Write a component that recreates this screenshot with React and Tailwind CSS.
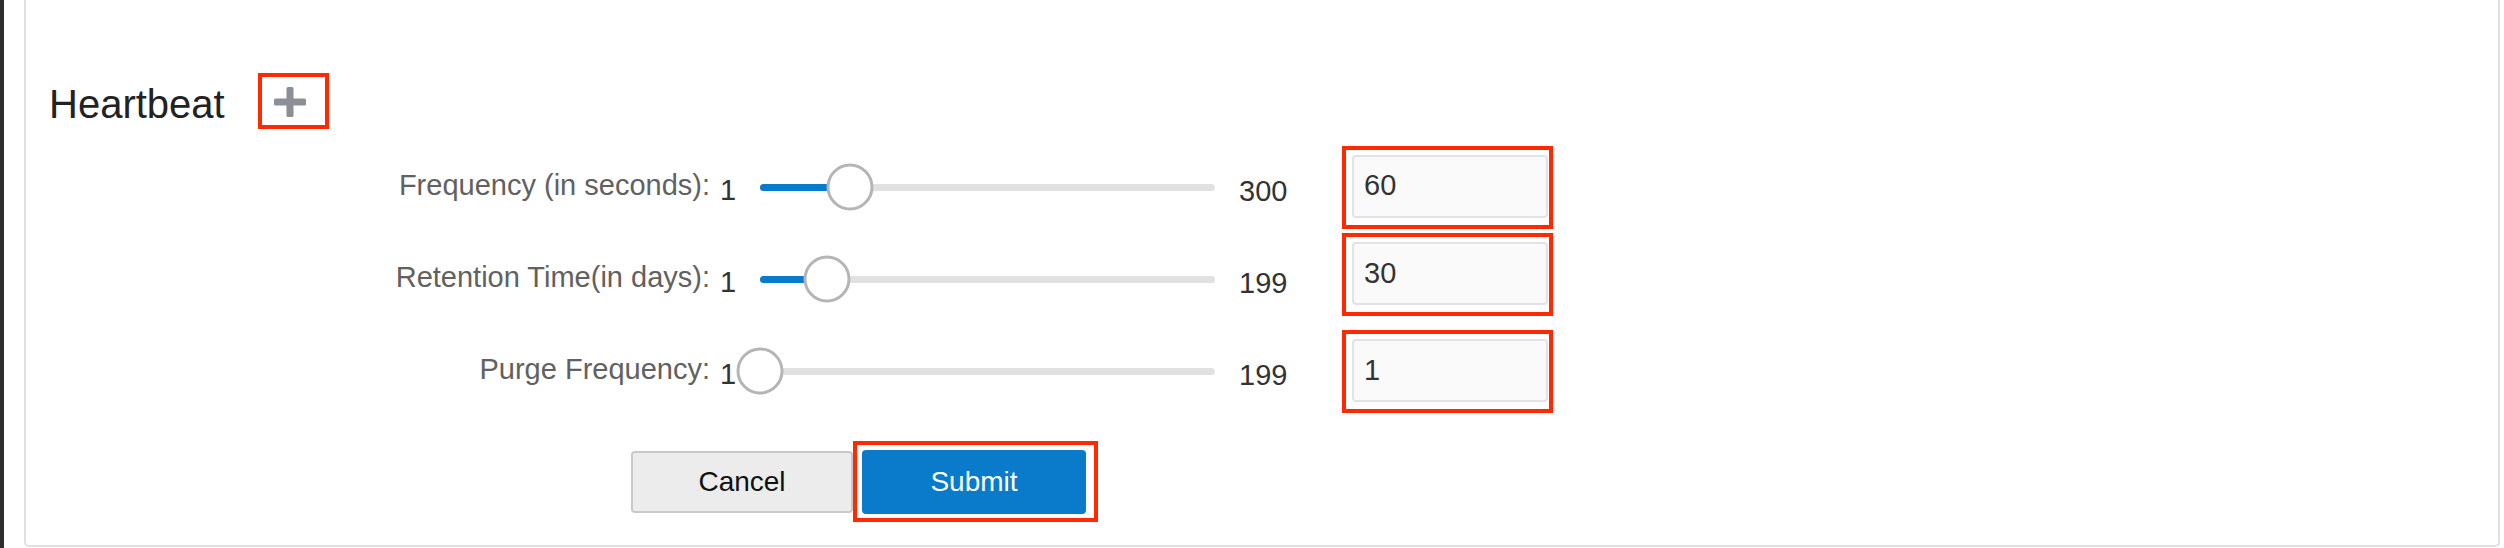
import React from 'react';

const FONT = { fontFamily: '"Liberation Sans", Arial, sans-serif' };

const ROWS = [
  { label: 'Frequency (in seconds):', min: 1, max: 300, value: 60, boxClass: 'self-center' },
  { label: 'Retention Time(in days):', min: 1, max: 199, value: 30, boxClass: 'self-start' },
  { label: 'Purge Frequency:', min: 1, max: 199, value: 1, boxClass: 'self-center mt-[1px]' },
];

function Slider({ min, max, value }) {
  const pct = ((value - min) / (max - min)) * 100;
  return (
    <div className="w-[501px] px-[23px] flex items-center">
      <div className="relative w-full h-[7px] rounded-full bg-[#e1e1e1]">
        <div className="absolute left-0 top-0 h-full rounded-full bg-[#0a7bcb]" style={{ width: `${pct}%` }} />
        <div
          className="absolute top-1/2 w-[47px] h-[47px] -translate-x-1/2 -translate-y-1/2 rounded-full bg-white border-[3px] border-[#b5b5b5]"
          style={{ left: `${pct}%` }}
        />
      </div>
    </div>
  );
}

function Row({ label, min, max, value, boxClass }) {
  return (
    <div className="flex items-center h-[92px]">
      <div className="w-[684px] text-right text-[29px] leading-[32px] text-[#616161] mb-[4px]">{label}</div>
      <span className="w-[27px] pl-[10px] text-[29px] leading-[32px] text-[#333] mt-[6px]">{min}</span>
      <Slider min={min} max={max} value={value} />
      <span className="w-[104px] pl-[1px] text-[29px] leading-[32px] text-[#333] mt-[8px]">{max}</span>
      <div className={`w-[211px] h-[83px] border-4 border-[#ff2a00] pl-[6px] pt-[5px] ${boxClass}`}>
        <div className="w-[196px] h-[63px] rounded-[4px] border-2 border-[#e3e3e3] bg-[#fafafa] flex items-center pl-[10px] text-[29px] text-[#333]">
          {value}
        </div>
      </div>
    </div>
  );
}

export default function App() {
  return (
    <div className="flex w-full h-[548px] bg-white" style={FONT}>
      <div className="w-[4px] bg-[#2d2d2d]" />
      <div className="flex-1 ml-[20px] mr-[4px] mb-[1px] border-x-2 border-b-2 border-[#e0e0e0] rounded-b-[5px]">
        {/* Header */}
        <div className="flex items-start pt-[73px] pl-[23px]">
          <span className="text-[40px] leading-[46px] mt-[8px] text-[#222]">Heartbeat</span>
          <div className="ml-[33px] w-[71px] h-[56px] border-4 border-[#ff2a00] pl-[12px] pt-[10px]">
            <svg width="32" height="30" viewBox="0 0 32 30">
              <rect x="0" y="11.5" width="32" height="7" rx="1.5" fill="#8a9096" />
              <rect x="12.5" y="0" width="7" height="30" rx="1.5" fill="#8a9096" />
            </svg>
          </div>
        </div>

        {/* Sliders */}
        <div className="mt-[12px]">
          {ROWS.map((r) => (
            <Row key={r.label} {...r} />
          ))}
        </div>

        {/* Buttons */}
        <div className="flex items-center mt-[24px] pl-[605px]">
          <button className="w-[222px] h-[62px] rounded-[4px] border-2 border-[#c9c9c9] bg-[#ececec] text-[28px] text-[#111]">
            Cancel
          </button>
          <div className="border-4 border-[#ff2a00] pl-[5px] pt-[5px] pr-[8px] pb-[4px]">
            <button className="w-[224px] h-[64px] rounded-[4px] bg-[#0a7bcb] text-[28px] text-white">
              Submit
            </button>
          </div>
        </div>
      </div>
    </div>
  );
}
